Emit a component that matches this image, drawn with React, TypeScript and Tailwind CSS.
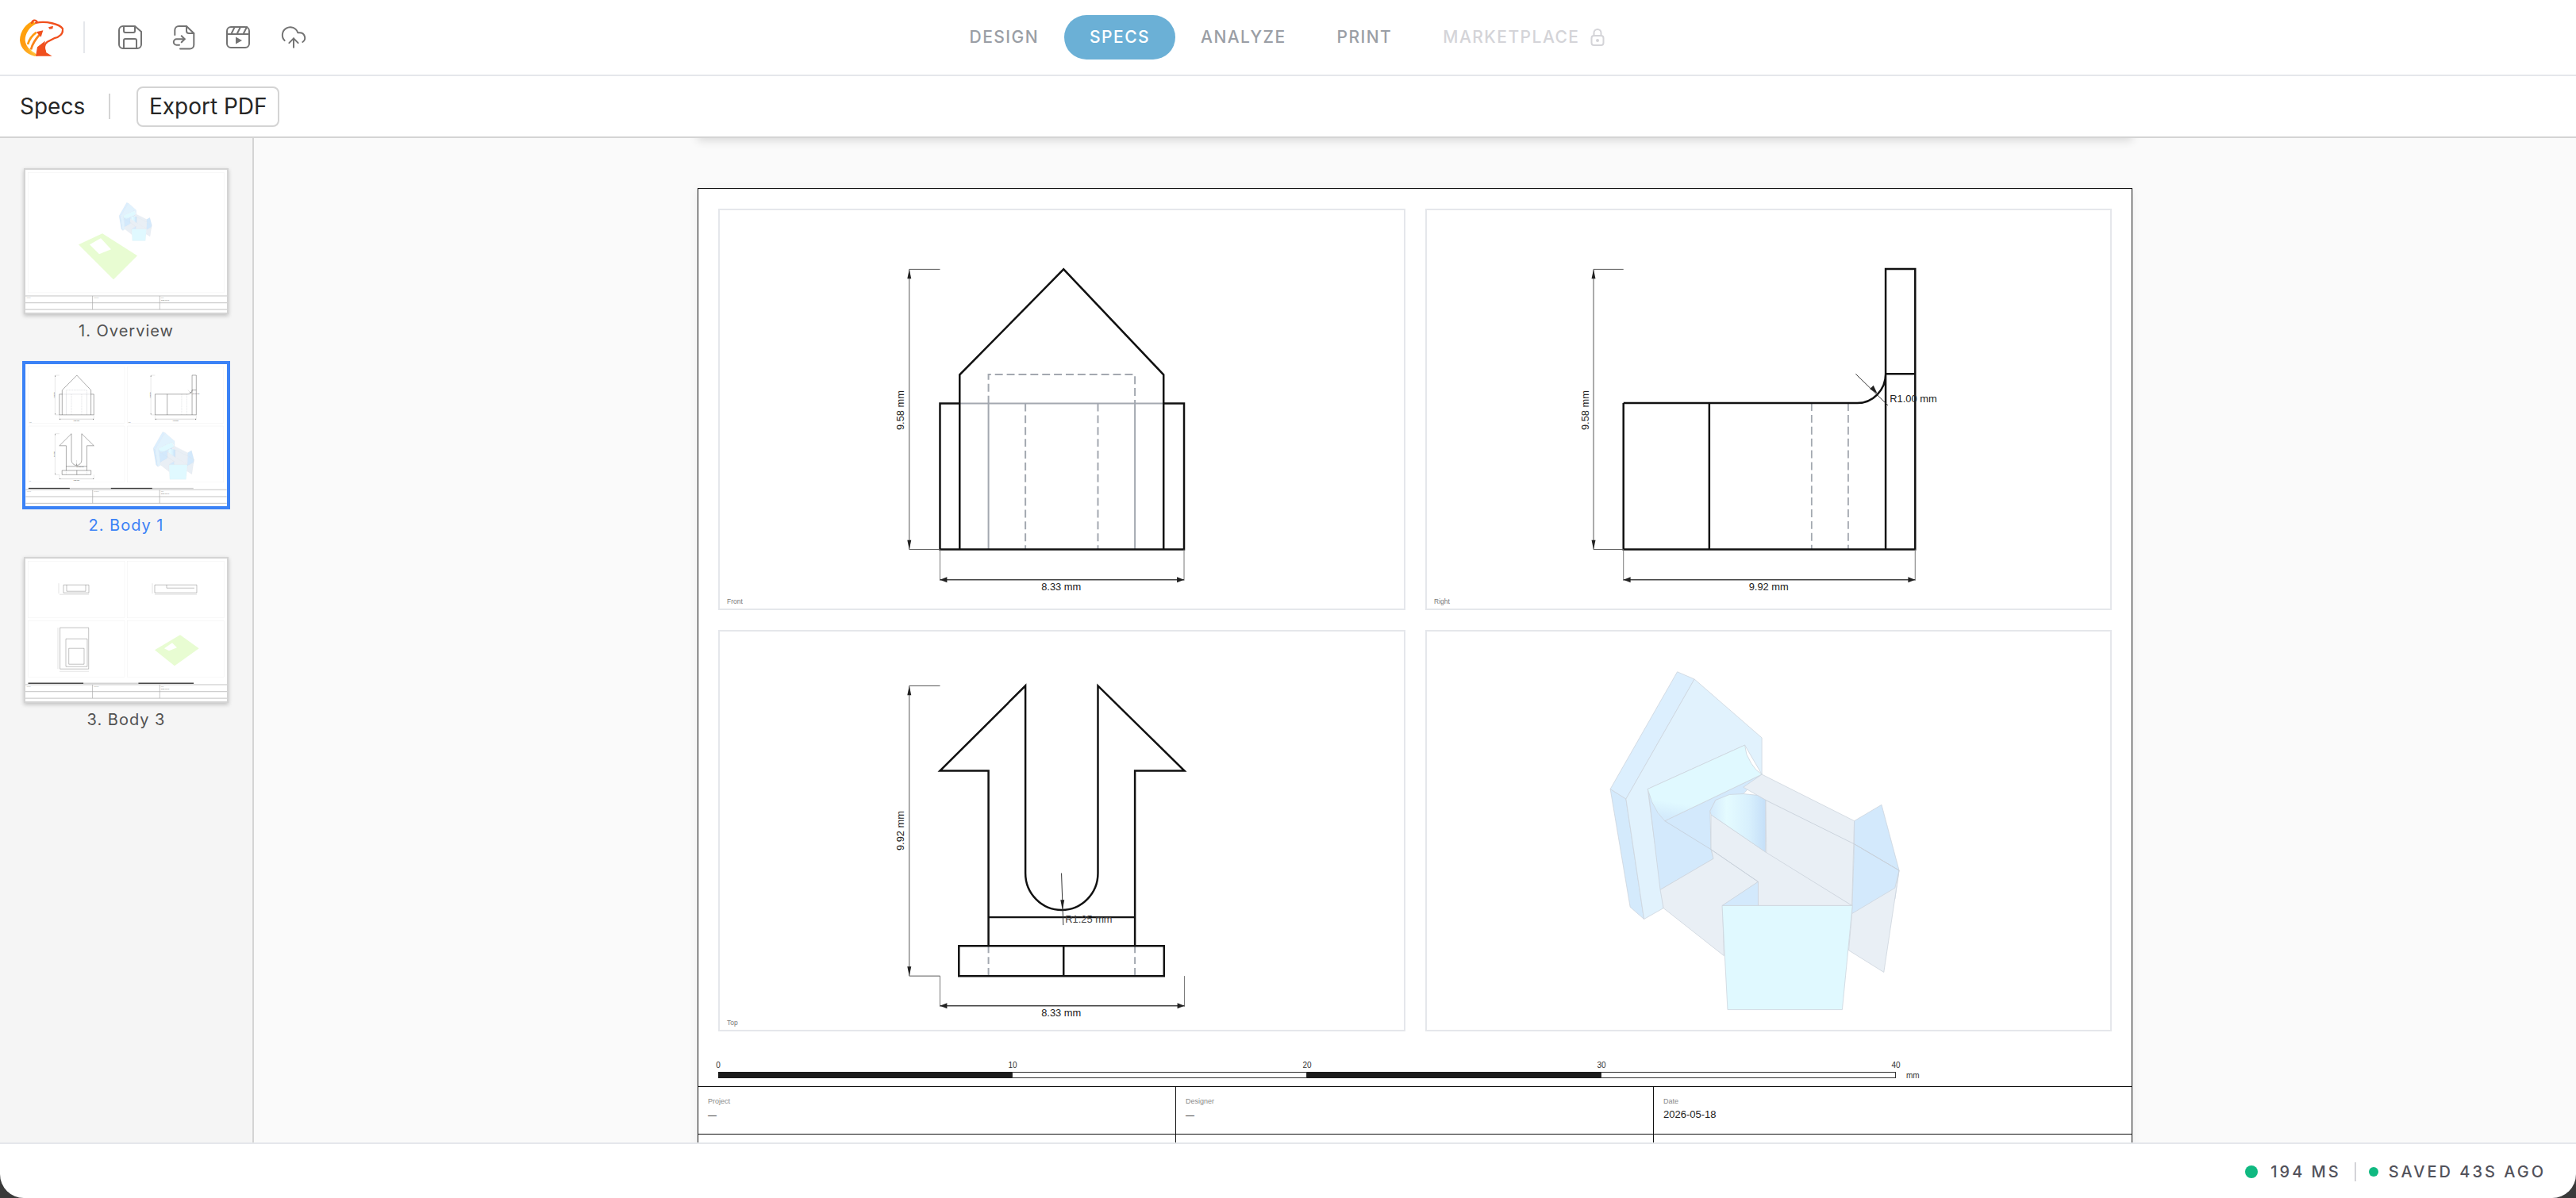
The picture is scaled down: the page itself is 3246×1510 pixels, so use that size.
import { CloudUpload } from "lucide-react"
import type { ReactNode } from "react"

const tabs = ["DESIGN", "SPECS", "ANALYZE", "PRINT"]

// small helpers for the drawing views (coordinates are panel px, panel = 865x506)
function VDim({ x, y1, y2, extX, label, textY }: { x: number; y1: number; y2: number; extX: number; label: string; textY: number }) {
  return (
    <g>
      <path d={`M${extX} ${y1}H${x}V${y2}H${extX}`} fill="none" stroke="#555" strokeWidth="1" />
      <polygon points={`${x},${y1} ${x - 2.5},${y1 + 12} ${x + 2.5},${y1 + 12}`} fill="#222" />
      <polygon points={`${x},${y2} ${x - 2.5},${y2 - 12} ${x + 2.5},${y2 - 12}`} fill="#222" />
      <text x={x - 11} y={textY} transform={`rotate(-90 ${x - 11} ${textY})`} textAnchor="middle" dominantBaseline="central" fontSize="13" fill="#222">
        {label}
      </text>
    </g>
  )
}

function HDim({ x1, x2, y, from, label, textX }: { x1: number; x2: number; y: number; from: number; label: string; textX: number }) {
  return (
    <g>
      <path d={`M${x1} ${from}V${y + 1}M${x2} ${from}V${y + 1}`} fill="none" stroke="#777" strokeWidth="1" />
      <path d={`M${x1} ${y}H${x2}`} stroke="#444" strokeWidth="1.5" />
      <polygon points={`${x1},${y} ${x1 + 9},${y - 3.5} ${x1 + 9},${y + 3.5}`} fill="#222" />
      <polygon points={`${x2},${y} ${x2 - 9},${y - 3.5} ${x2 - 9},${y + 3.5}`} fill="#222" />
      <text x={textX} y={y + 9} textAnchor="middle" dominantBaseline="central" fontSize="13" fill="#222">
        {label}
      </text>
    </g>
  )
}

function ViewName({ name }: { name: string }) {
  return (
    <text x="7.5" y="497" dominantBaseline="central" fontSize="8.5" fill="#777">
      {name}
    </text>
  )
}

function FrontView() {
  return (
    <g>
      {/* hidden lines */}
      <path d="M339.6 245.5V431M525.6 245.5V431M303 245.5H562" fill="none" stroke="#a3a8b0" strokeWidth="2" />
      <path d="M339.6 245.5V208.7H525.6V245.5M386.5 245.5V431M478.6 245.5V431" fill="none" stroke="#a3a8b0" strokeWidth="2" strokeDasharray="10 5" />
      <path d="M303 431V209L435 75L562 209V431" fill="none" stroke="#111" strokeWidth="2.5" />
      <path d="M303 245.5H278V431H588V245.5H562" fill="none" stroke="#111" strokeWidth="2.5" />
      <VDim x={239} y1={75} y2={431} extX={278} label="9.58 mm" textY={254} />
      <HDim x1={278} x2={588} y={469.5} from={431} label="8.33 mm" textX={432} />
      <ViewName name="Front" />
    </g>
  )
}

function RightView() {
  return (
    <g>
      <path d="M487 245V431M533.5 245V431" fill="none" stroke="#a3a8b0" strokeWidth="1.8" strokeDasharray="10 5" />
      <path d="M248 245H544.8A36 37 0 0 0 581 208H618.5V74.6H581V431M618.5 208V431H248V245M357 245V431" fill="none" stroke="#111" strokeWidth="2.5" />
      <path d="M543 208L584 248" stroke="#333" strokeWidth="1" />
      <polygon points="570.5,233 561,227 565.5,222.5" fill="#222" />
      <text x="586.3" y="239.3" dominantBaseline="central" fontSize="13" fill="#222">
        R1.00 mm
      </text>
      <VDim x={210} y1={75} y2={431} extX={248} label="9.58 mm" textY={254} />
      <HDim x1={248} x2={618.5} y={469.5} from={431} label="9.92 mm" textX={432.5} />
      <ViewName name="Right" />
    </g>
  )
}

function TopView() {
  return (
    <g>
      <path d="M339.6 399.4V437.6M525.6 399.4V437.6" fill="none" stroke="#a3a8b0" strokeWidth="2" strokeDasharray="9 5" />
      <path
        d="M339.6 399.4V176.9H278L386.5 68.9V307A46 46.8 0 0 0 478.6 307V68.9L588.5 176.9H525.6V399.4M339.6 363H525.6M302 399.4H562.6V437.6H302ZM435 399.4V437.6"
        fill="none"
        stroke="#111"
        strokeWidth="2.5"
      />
      <path d="M432.3 307L434.6 373" stroke="#333" strokeWidth="1" />
      <polygon points="433.6,353.8 431,341 436,341" fill="#222" />
      <text x="437" y="365.4" dominantBaseline="central" fontSize="13" fill="#444">
        R1.25 mm
      </text>
      <VDim x={239} y1={69} y2={437.6} extX={278} label="9.92 mm" textY={253} />
      <path d="M278 437.6V476M588.5 437.6V476" stroke="#777" strokeWidth="1" />
      <HDim x1={278} x2={588.5} y={475.6} from={476} label="8.33 mm" textX={432} />
      <ViewName name="Top" />
    </g>
  )
}

// iso faces were read off the reference at a stretched scale, so map them here
const iso = (s: string) =>
  s
    .split(" ")
    .map((p) => {
      const [x, y] = p.split(",").map(Number)
      return `${(x * 0.5869 - 16.4).toFixed(1)},${(y * 0.4655 - 14).toFixed(1)}`
    })
    .join(" ")

const isoFaces: [string, string][] = [
  ["422,460 456,487 495,815 465,782", "#d4eafc"],
  ["422,460 567,140 604,160 456,487", "#dceffe"],
  ["456,487 604,160 750,320 750,420 713,340 503,460 537,785 495,815", "#e1f2fd"],
  ["505,470 540,547 750,420 710,473 650,490 638,520 640,625 645,650 530,735", "#d3e9fc"],
  ["503,460 713,340 717,365 727,390 738,408 750,420 540,547 525,525 512,495", "url(#fillet)"],
  ["710,455 750,420 950,547 945,778 760,635 758,490", "#e9eff5"],
  ["950,547 1009,503 1047,682 950,610", "#d3e9fc"],
  ["950,610 1047,682 1038,760 945,800", "#d3e9fc"],
  ["945,800 1038,730 1047,682 1014,960 938,900", "#e9eff5"],
  ["640,620 742,713 665,778 668,915 537,785 530,735 645,650", "#e9eff5"],
  ["640,530 758,632 945,778 742,778 742,713 640,625", "#e9eff5"],
  ["638,520 650,490 680,475 710,473 740,477 758,490 758,632 640,530", "url(#bore)"],
  ["742,713 742,778 664,778", "#d3e9fc"],
  ["664,778 946,778 924,1062 676,1062", "#e0f9ff"],
]

function IsoView() {
  return (
    <g>
      <defs>
        <linearGradient id="fillet" x1="0.55" y1="0.35" x2="0.4" y2="1">
          <stop offset="0.7" stopColor="#e0f9ff" />
          <stop offset="1" stopColor="#d4ebfc" />
        </linearGradient>
        <linearGradient id="bore" x1="0" y1="0" x2="1" y2="0">
          <stop offset="0" stopColor="#d3e9fc" />
          <stop offset="0.3" stopColor="#e4fbff" />
          <stop offset="0.7" stopColor="#d8f0fd" />
          <stop offset="1" stopColor="#c5dff8" />
        </linearGradient>
      </defs>
      {isoFaces.map(([pts, fill]) => (
        <polygon key={pts} points={iso(pts)} fill={fill} stroke="#ccd4dd" strokeWidth="0.8" strokeLinejoin="round" />
      ))}
      <polyline points={iso("758,490 950,610 1047,682")} fill="none" stroke="#c4ccd6" strokeWidth="0.8" />
      <polyline points={iso("540,547 640,625 742,713")} fill="none" stroke="#c4ccd6" strokeWidth="0.8" />
    </g>
  )
}

function Panel({ children }: { children?: ReactNode }) {
  return (
    <div className="h-[506px] border-2 border-[#e5e7eb]">
      <svg viewBox="0 0 865 506" className="h-full w-full font-['Liberation_Sans',sans-serif]">
        {children}
      </svg>
    </div>
  )
}

function TitleCell({ label, value, last, dash }: { label: string; value?: string; last?: boolean; dash?: boolean }) {
  return (
    <div className={`h-[60px] border-b border-[#111] pl-[12px] pt-[12px] ${last ? "" : "border-r"}`}>
      <div className="text-[9px] leading-[12px] text-[#888]">{label}</div>
      <div className={`mt-[3px] leading-[16px] text-[#222] ${dash ? "text-[11px]" : "text-[13px]"}`}>{value}</div>
    </div>
  )
}

function Sheet() {
  return (
    <div className="h-[1278px] w-[1808px] shrink-0 border border-[#111] bg-white font-['Liberation_Sans',sans-serif] shadow-[0_2px_14px_rgba(0,0,0,0.05)]">
      <div className="grid grid-cols-2 gap-x-[25px] gap-y-[25px] px-[25px] pt-[25px]">
        <Panel>
          <FrontView />
        </Panel>
        <Panel>
          <RightView />
        </Panel>
        <Panel>
          <TopView />
        </Panel>
        <Panel>
          <IsoView />
        </Panel>
      </div>
      {/* scale bar */}
      <div className="px-[25px] pt-[36px]">
        <div className="flex w-[1484px] justify-between text-[10px] leading-[14px] text-[#333]">
          {["0", "10", "20", "30", "40"].map((n) => (
            <span key={n} className="flex w-0 justify-center">
              {n}
            </span>
          ))}
        </div>
        <div className="mt-[1px] flex h-[8px] items-center">
          <div className="flex h-[8px] w-[1484px]">
            <div className="flex-1 bg-[#1c1c1c]" />
            <div className="flex-1 border border-[#333] bg-white" />
            <div className="flex-1 bg-[#1c1c1c]" />
            <div className="flex-1 border border-[#333] bg-white" />
          </div>
          <span className="ml-[13px] text-[10px] text-[#333]">mm</span>
        </div>
      </div>
      {/* title block */}
      <div className="mt-[10px] grid grid-cols-3 border-t border-[#111]">
        <TitleCell label="Project" value="—" dash />
        <TitleCell label="Designer" value="—" dash />
        <TitleCell label="Date" value="2026-05-18" last />
        <TitleCell label="" />
        <TitleCell label="" />
        <TitleCell label="" last />
      </div>
    </div>
  )
}

// thumbnail frame: same sheet layout, drawn at sheet units (1808 x 1278)
function ThumbSheet({ bar, single, children }: { bar?: [number, number][]; single?: boolean; children: ReactNode }) {
  return (
    <svg viewBox="0 0 1808 1278" className="h-full w-full font-['Liberation_Sans',sans-serif]">
      <rect width="1808" height="1278" fill="white" />
      {single ? (
        <rect x="25" y="21" width="1758" height="1080" fill="none" stroke="#eee" strokeWidth="3" />
      ) : (
        <g fill="none" stroke="#eee" strokeWidth="3">
          <rect x="25" y="25" width="865" height="506" />
          <rect x="916" y="25" width="865" height="506" />
          <rect x="25" y="557" width="865" height="506" />
          <rect x="916" y="557" width="865" height="506" />
        </g>
      )}
      {children}
      {bar && (
        <g>
          <rect x="25" y="1113" width="1484" height="9" fill="#ccc" />
          {bar.map(([x, w]) => (
            <rect key={x} x={x} y="1113" width={w} height="9" fill="#333" />
          ))}
        </g>
      )}
      <path d="M0 1130H1808M0 1192H1808M0 1252H1808M602 1130V1252M1205 1130V1252" stroke="#aaa" strokeWidth="5" />
      <g fontSize="11" fill="#999">
        <text x="12" y="1150">Project</text>
        <text x="615" y="1150">Designer</text>
        <text x="1218" y="1150">Date</text>
      </g>
      <text x="1218" y="1170" fontSize="14" fill="#555">2026-05-18</text>
    </svg>
  )
}

function Thumb({ label, active, children }: { label: string; active?: boolean; children: ReactNode }) {
  return (
    <div className="flex flex-col items-center">
      <div
        className={
          active
            ? "-mb-px -mt-[2px] h-[187px] w-[262px] border-4 border-[#3b82f6]"
            : "h-[184px] w-[258px] border-2 border-[#d4d4d4] shadow-[0_2px_5px_rgba(0,0,0,0.22)]"
        }
      >
        {children}
      </div>
      <div className={`mt-[8px] text-[20px] leading-[26px] tracking-[1px] ${active ? "text-[#3b82f6]" : "text-[#525252]"}`}>{label}</div>
    </div>
  )
}

function Logo() {
  return (
    <svg viewBox="0 0 165 140" className="h-[47px] w-[55px] shrink-0">
      <defs>
        <linearGradient id="logoBack" x1="0.3" y1="0" x2="0.6" y2="1">
          <stop offset="0" stopColor="#ffa60a" />
          <stop offset="0.6" stopColor="#ff9a10" />
          <stop offset="1" stopColor="#ffb72e" />
        </linearGradient>
      </defs>
      {/* back crescent */}
      <path d="M50 6C25 15 0 45 0 80C2 110 25 132 55 140L70 138C45 125 22 105 20 80C20 55 35 30 60 18Z" fill="url(#logoBack)" />
      {/* ear and head line */}
      <path d="M45 14C48 4 58 0 65 10M60 14C100 6 150 18 162 36C165 55 150 68 130 72L104 86C92 94 90 110 96 122" fill="none" stroke="#f0501e" strokeWidth="7" strokeLinejoin="round" strokeLinecap="round" />
      <path d="M30 95C36 75 48 60 62 50" fill="none" stroke="#ff9a10" strokeWidth="8" />
      <path d="M42 115C48 90 62 72 78 55" fill="none" stroke="#f9821a" strokeWidth="8" />
      <path d="M34 112C40 120 48 128 58 132" fill="none" stroke="#ffc23d" strokeWidth="6" />
      <polygon points="88,42 62,48 80,68" fill="#f0501e" />
      <path d="M60 140L66 105L96 82L90 110L98 125L122 140Z" fill="#f0501e" />
      <polygon points="108,30 126,26 124,36 112,38" fill="#f0501e" />
    </svg>
  )
}

export default function App() {
  return (
    <div className="flex h-screen w-screen flex-col overflow-hidden bg-[#3a3a3a] font-['Inter',sans-serif]">
      <div className="flex min-h-0 flex-1 flex-col overflow-hidden rounded-b-[30px] bg-white">
        {/* TOP BAR */}
        <header className="grid h-[96px] shrink-0 grid-cols-[1fr_auto_1fr] items-center border-b-2 border-[#e5e7eb]">
          <div className="flex items-center pl-[25px]">
            <Logo />
            <div className="ml-[25px] h-[40px] w-[2px] bg-[#e5e7eb]" />
            <div className="ml-[42px] flex items-center gap-[38px] text-[#737373]">
              <svg viewBox="0 0 30 30" className="h-[30px] w-[30px]" fill="none" stroke="currentColor" strokeWidth="2">
                <path d="M6 1H21L29 8V24A5 5 0 0 1 24 29H6A5 5 0 0 1 1 24V6A5 5 0 0 1 6 1Z" />
                <path d="M7 1V7A2 2 0 0 0 9 9H19A2 2 0 0 0 21 7V1" />
                <path d="M7 29V19A2 2 0 0 1 9 17H21A2 2 0 0 1 23 19V29" />
              </svg>
              <svg viewBox="0 0 30 32" className="h-[32px] w-[30px]" fill="none" stroke="currentColor" strokeWidth="2" strokeLinecap="round" strokeLinejoin="round">
                <path d="M3.3 13V7A5 5 0 0 1 8.3 2H18L27.3 11V25.5A5 5 0 0 1 22.3 30.5H10" />
                <path d="M18 2V8A3 3 0 0 0 21 11H27.3" />
                <path d="M15.7 18.3H5.5A3.7 3.7 0 0 0 5.5 25.7H9" />
                <path d="M11.7 14.3L15.7 18.3L11.7 22.3" />
              </svg>
              <svg viewBox="0 0 30 28" className="h-[28px] w-[30px]" fill="none" stroke="currentColor" strokeWidth="2" strokeLinecap="round">
                <rect x="1" y="1" width="28" height="26" rx="5" />
                <path d="M1 10H29M6.3 10L10.7 1M13.5 10L18 1M21.5 10L26 1" />
                <polygon points="12,13.5 20,18 12,22.5" fill="currentColor" stroke="none" />
              </svg>
              <CloudUpload size={34} strokeWidth={1.4} />
            </div>
          </div>
          <nav className="flex items-center pr-[34px]">
            {tabs.map((t) => (
              <div
                key={t}
                className={`flex h-[56px] items-center rounded-full px-[32px] text-[21px] font-medium tracking-[0.07em] ${t === "SPECS" ? "bg-[#6bb0d6] text-white" : "text-[#9a9ea5]"}`}
              >
                {t}
              </div>
            ))}
            <div className="flex items-center pl-[32px] text-[21px] font-medium tracking-[0.07em] text-[#d4d4d8]">
              MARKETPLACE
              <svg viewBox="0 0 18 22" className="ml-[14px] h-[22px] w-[18px]" fill="none" stroke="currentColor" strokeWidth="2">
                <rect x="1.5" y="9" width="15" height="12" rx="3" />
                <path d="M4.5 9V5.5A4.5 4.5 0 0 1 13.5 5.5V9" />
                <circle cx="9" cy="15" r="1" fill="currentColor" />
              </svg>
            </div>
          </nav>
          <div />
        </header>

        {/* PAGE TOOLBAR */}
        <div className="flex h-[78px] shrink-0 items-center border-b-2 border-[#d4d4d4] pl-[25px] text-[28px] text-[#262626]">
          <span>Specs</span>
          <div className="ml-[30px] h-[32px] w-[2px] bg-[#d4d4d4]" />
          <button className="ml-[33px] flex h-[51px] w-[180px] items-center justify-center rounded-[8px] border-2 border-[#d4d4d4] bg-white">
            Export PDF
          </button>
        </div>

        <div className="flex min-h-0 flex-1">
          {/* PAGE LIST */}
          <aside className="flex w-[320px] shrink-0 flex-col items-center gap-[27px] border-r-2 border-[#d4d4d4] bg-[#f5f5f5] pt-[38px]">
            <Thumb label="1. Overview">
              <ThumbSheet single>
                <g transform="translate(840 291) scale(0.8) translate(-231 -50)">
                  <IsoView />
                </g>
                <g transform="scale(7.117) translate(-32 -214)">
                  <polygon points="99,308 129,294 173,322 143,352" fill="#e8fcd2" />
                  <polygon points="113,308 127,300 140,314 125,320" fill="#fff" />
                </g>
              </ThumbSheet>
            </Thumb>
            <Thumb label="2. Body 1" active>
              <ThumbSheet bar={[[25, 371], [767, 371]]}>
                <g transform="translate(25 25)">
                  <FrontView />
                </g>
                <g transform="translate(916 25)">
                  <RightView />
                </g>
                <g transform="translate(25 557)">
                  <TopView />
                </g>
                <g transform="translate(916 557)">
                  <IsoView />
                </g>
              </ThumbSheet>
            </Thumb>
            <Thumb label="3. Body 3">
              <ThumbSheet bar={[[25, 495], [1014, 495]]}>
                <g transform="scale(7.117) translate(-32 -704)" fill="none" stroke="#333" strokeWidth="0.3">
                  <path d="M80 737H112V747H80ZM84 737V745H108V737" />
                  <path d="M195 737H248V747H195ZM210 737V741H245" />
                  <path d="M75.6 791H111.7V843H75.6ZM83 805H110V840H83ZM86.7 817H106V837H86.7Z" />
                  <path d="M75 749H112M195 749H248M74 735V748M192 735V748M73 791V843M75 846H112" strokeWidth="0.2" stroke="#777" />
                  <polygon points="195,819 227,800 250.7,817 220,839" fill="#e8fcd2" stroke="none" />
                  <polygon points="207,817 217,810 223,816 213,820" fill="#fff" stroke="none" />
                </g>
              </ThumbSheet>
            </Thumb>
          </aside>

          {/* SHEET VIEW */}
          <main className="flex min-w-0 flex-1 flex-col items-center overflow-hidden bg-[#fafafa]">
            <div className="-mt-[20px] h-[20px] w-[1808px] shrink-0 bg-white shadow-[0_3px_12px_rgba(0,0,0,0.14)]" />
            <div className="mt-[63px] shrink-0">
              <Sheet />
            </div>
          </main>
        </div>

        {/* STATUS BAR */}
        <footer className="flex h-[70px] shrink-0 items-center justify-end border-t-2 border-[#e5e7eb] pr-[38px] pt-[2px] text-[20px] font-medium tracking-[3px] text-[#52525b]">
          <span className="h-[16px] w-[16px] rounded-full bg-[#10b981]" />
          <span className="ml-[16px]">194 MS</span>
          <div className="ml-[17px] h-[24px] w-[2px] bg-[#d4d4d8]" />
          <span className="ml-[16px] h-[12px] w-[12px] rounded-full bg-[#10b981]" />
          <span className="ml-[13px]">SAVED 43S AGO</span>
        </footer>
      </div>
    </div>
  )
}
